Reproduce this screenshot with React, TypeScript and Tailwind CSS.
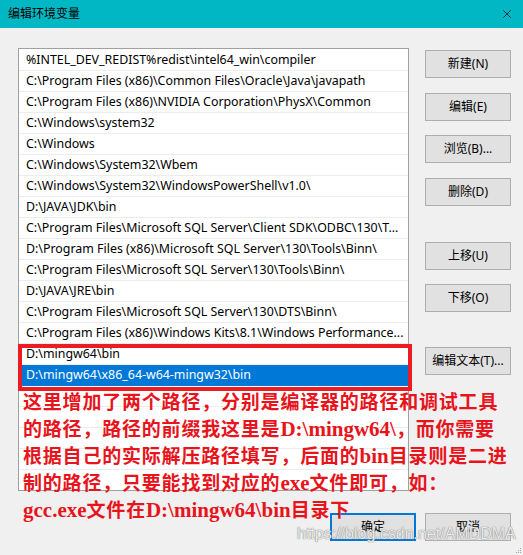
import { X } from "lucide-react";

const paths = [
  "%INTEL_DEV_REDIST%redist\\intel64_win\\compiler",
  "C:\\Program Files (x86)\\Common Files\\Oracle\\Java\\javapath",
  "C:\\Program Files (x86)\\NVIDIA Corporation\\PhysX\\Common",
  "C:\\Windows\\system32",
  "C:\\Windows",
  "C:\\Windows\\System32\\Wbem",
  "C:\\Windows\\System32\\WindowsPowerShell\\v1.0\\",
  "D:\\JAVA\\JDK\\bin",
  "C:\\Program Files\\Microsoft SQL Server\\Client SDK\\ODBC\\130\\T...",
  "D:\\Program Files (x86)\\Microsoft SQL Server\\130\\Tools\\Binn\\",
  "C:\\Program Files\\Microsoft SQL Server\\130\\Tools\\Binn\\",
  "D:\\JAVA\\JRE\\bin",
  "C:\\Program Files\\Microsoft SQL Server\\130\\DTS\\Binn\\",
  "C:\\Program Files (x86)\\Windows Kits\\8.1\\Windows Performance...",
  "D:\\mingw64\\bin",
  "D:\\mingw64\\x86_64-w64-mingw32\\bin",
  "",
  "",
  "",
  "",
  "",
];

const selected = 15;

const note = [
  "这里增加了两个路径，分别是编译器的路径和调试工具",
  "的路径，路径的前缀我这里是D:\\mingw64\\，而你需要",
  "根据自己的实际解压路径填写，后面的bin目录则是二进",
  "制的路径，只要能找到对应的exe文件即可，如：",
  "gcc.exe文件在D:\\mingw64\\bin目录下",
];

// latin runs in the note are set a bit larger, like the original screenshot
const NoteLine = ({ text }: { text: string }) => (
  <div>
    {text.split(/([A-Za-z0-9:.\\]+)/).map((part, i) =>
      i % 2 === 1 ? (
        <span key={i} className="text-[21px] tracking-normal">
          {part}
        </span>
      ) : (
        <span key={i}>{part}</span>
      )
    )}
  </div>
);

const WinButton = ({ label, className = "" }: { label: string; className?: string }) => (
  <button
    className={`w-[86px] h-[28px] bg-[#e1e1e1] border border-[#adadad] text-[12px] text-black flex items-center justify-center ${className}`}
  >
    {label}
  </button>
);

export default function App() {
  return (
    <div className="relative w-[523px] h-[555px] overflow-hidden bg-[#f0f0f0] font-['Noto_Sans','Noto_Sans_CJK_SC',sans-serif] text-black">
      {/* Title bar */}
      <div className="h-[28px] bg-[#00b7c3] flex items-center justify-between pl-[8px] pr-[9px]">
        <span className="text-[12px]">编辑环境变量</span>
        <X className="w-[14px] h-[14px]" strokeWidth={1.2} />
      </div>

      <div className="flex items-start">
        {/* Path list */}
        <div className="ml-[18px] mt-[20px] w-[391px] h-[443px] bg-white border border-[#a0a0a0] pt-px overflow-hidden">
          {paths.map((p, i) => (
            <div
              key={i}
              className={`h-[21px] flex items-center pl-[7px] text-[12.4px] whitespace-nowrap overflow-hidden border-b ${
                i === selected
                  ? "bg-[#0078d7] text-white border-[#0078d7]"
                  : "border-[#ececec]"
              }`}
            >
              {p}
            </div>
          ))}
        </div>

        {/* Side buttons */}
        <div className="ml-[16px] mt-[22px] flex flex-col">
          <WinButton label="新建(N)" />
          <WinButton label="编辑(E)" className="mt-[15px]" />
          <WinButton label="浏览(B)..." className="mt-[14px]" />
          <WinButton label="删除(D)" className="mt-[15px]" />
          <WinButton label="上移(U)" className="mt-[36px]" />
          <WinButton label="下移(O)" className="mt-[14px]" />
          <WinButton label="编辑文本(T)..." className="mt-[35px]" />
        </div>
      </div>

      {/* Footer */}
      <div className="flex justify-end gap-[9px] pr-[12px] mt-[22px]">
        <button className="w-[86px] h-[28px] bg-[#e1e1e1] border-2 border-[#0078d7] text-[12px] flex items-center justify-center">
          确定
        </button>
        <WinButton label="取消" />
      </div>

      {/* Resize grip */}
      <div className="absolute right-[2px] bottom-[2px] grid grid-cols-3 gap-[1px]">
        {[0, 0, 1, 0, 1, 1, 1, 1, 1].map((v, i) => (
          <span key={i} className={`w-[1px] h-[1px] ${v ? "bg-[#a0a0a0]" : ""}`} />
        ))}
      </div>

      {/* Red highlight box */}
      <div className="absolute left-[18px] top-[344px] w-[394px] h-[47px] border-4 border-[#ec1c24]" />

      {/* Annotation */}
      <div className="absolute left-[23px] top-[389px] text-[19px] leading-[27px] tracking-[0.8px] font-bold text-[#e8141c] font-['Liberation_Serif','Noto_Sans_CJK_SC',serif] whitespace-nowrap">
        {note.map((line, i) => (
          <NoteLine key={i} text={line} />
        ))}
      </div>

      {/* Watermark */}
      <div className="absolute left-[297px] top-[522px] text-[16px] font-['Liberation_Sans',sans-serif] text-white/85 [text-shadow:0_0_1px_#7a7a7a,0_0_1px_#7a7a7a]">
        https://blog.csdn.net/AMDDMA
      </div>
    </div>
  );
}
